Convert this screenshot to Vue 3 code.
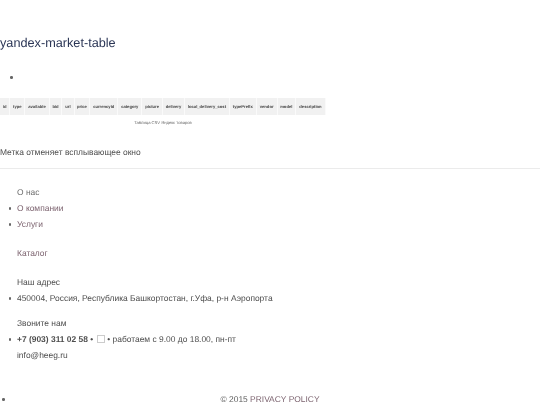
<template>
  <div class="page">
    <h1 class="title">yandex-market-table</h1>
    <ul class="empty-list"><li></li></ul>

    <figure class="csv-figure">
      <table class="csv-table">
        <thead>
          <tr>
            <th v-for="col in columns" :key="col.name" :style="{ width: col.width + 'px' }">{{ col.name }}</th>
          </tr>
        </thead>
      </table>
      <figcaption>Таблица CSV Яндекс товаров</figcaption>
    </figure>

    <p class="note">Метка отменяет всплывающее окно</p>
    <hr class="divider" />

    <section class="links">
      <p class="indent">О нас</p>
      <ul>
        <li><a href="#">О компании</a></li>
        <li><a href="#">Услуги</a></li>
      </ul>
      <p class="indent catalog"><a href="#">Каталог</a></p>
    </section>

    <section class="contacts">
      <p class="indent">Наш адрес</p>
      <ul>
        <li>450004, Россия, Республика Башкортостан, г.Уфа, р-н Аэропорта</li>
      </ul>
      <p class="indent call">Звоните нам</p>
      <ul>
        <li>
          <strong>+7 (903) 311 02 58 •</strong>
          <span class="missing-glyph"></span>
          <span>• работаем с 9.00 до 18.00, пн-пт</span>
        </li>
      </ul>
      <p class="indent">info@heeg.ru</p>
    </section>

    <footer class="footer">
      <ul><li></li></ul>
      <p>© 2015 <a href="#">PRIVACY POLICY</a></p>
    </footer>
  </div>
</template>

<script setup>
// widths measured from the table header
const columns = [
  { name: 'id', width: 10.3 },
  { name: 'type', width: 15 },
  { name: 'available', width: 24.4 },
  { name: 'bid', width: 12.6 },
  { name: 'url', width: 12.4 },
  { name: 'price', width: 15.6 },
  { name: 'currencyId', width: 28 },
  { name: 'category', width: 24 },
  { name: 'picture', width: 20.7 },
  { name: 'delivery', width: 22 },
  { name: 'local_delivery_cost', width: 45 },
  { name: 'typePrefix', width: 26.7 },
  { name: 'vendor', width: 21 },
  { name: 'model', width: 18.3 },
  { name: 'description', width: 30 },
];
</script>

<style>
html, body {
  margin: 0;
  background: #fff;
}
</style>

<style scoped>
.page {
  width: 540px;
  height: 405px;
  overflow: hidden;
  font-family: "Liberation Sans", Arial, sans-serif;
  font-size: 8.44px;
  line-height: 16px;
  color: #4d4d4d;
  text-rendering: geometricPrecision;
  filter: blur(0.4px);
}

p {
  margin: 0;
}

ul {
  margin: 0;
  padding: 0;
  list-style: none;
}

li::before {
  content: "";
  display: inline-block;
  width: 2.5px;
  height: 2.5px;
  margin: 0 6px 1px 8.5px;
  border-radius: 50%;
  background: #666;
  vertical-align: middle;
}

a {
  color: #7d6470;
  text-decoration: none;
}

.title {
  margin: 0;
  padding-top: 35px;
  font-size: 12.7px;
  font-weight: 400;
  line-height: 16px;
  color: #2b3656;
}

.empty-list {
  margin-top: 18px;
  height: 16px;
}

.empty-list li::before {
  margin-left: 10px;
}

.csv-figure {
  margin: 13px 0 0;
}

.csv-table {
  width: 326px;
  table-layout: fixed;
  border-collapse: separate;
  border-spacing: 0;
  font-size: 4.15px;
  line-height: 6px;
}

.csv-table th {
  box-sizing: border-box;
  height: 17px;
  padding: 0;
  background: #f1f1f1;
  border-right: 1px solid #fafafa;
  font-weight: 700;
  color: #444;
}

figcaption {
  width: 326px;
  margin-top: 5px;
  font-size: 4.15px;
  line-height: 6px;
  text-align: center;
  color: #666;
}

.note {
  margin-top: 18px;
}

.divider {
  margin: 8px 0 0;
  border: 0;
  border-top: 1px solid #ebebeb;
}

.links {
  margin-top: 15px;
  color: #6e6e6e;
}

.indent {
  padding-left: 17px;
}

.catalog {
  margin-top: 13px;
}

.contacts {
  margin-top: 13px;
}

.call {
  margin-top: 9px;
}

.missing-glyph {
  display: inline-block;
  width: 6px;
  height: 6px;
  margin: 0 2px 0 4px;
  border: 1px solid #ccc;
  vertical-align: -0.5px;
}

.footer {
  display: flex;
  margin-top: 28px;
  color: #5c5c5c;
}

.footer ul {
  width: 203px;
}

.footer li::before {
  margin-left: 2px;
}

.footer p {
  width: 134px;
  text-align: center;
}
</style>
